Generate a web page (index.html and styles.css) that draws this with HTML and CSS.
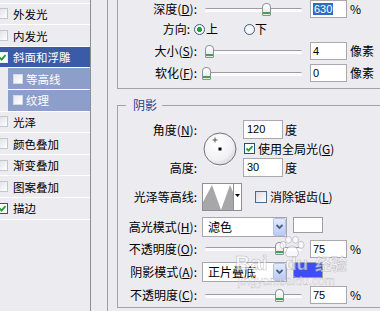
FILE: index.html
```html
<!DOCTYPE html>
<html lang="zh-CN">
<head>
<meta charset="utf-8">
<title>图层样式 - 斜面和浮雕</title>
<link rel="stylesheet" href="styles.css">
</head>
<body>
<div class="app">
  <div class="styles">
    <div class="partial"></div>
    <div class="item"><span class="cb"></span>外发光</div>
    <div class="item"><span class="cb"></span>内发光</div>
    <div class="item sel"><span class="cb on"><svg viewBox="0 0 9 9" width="9" height="9"><path d="M1.5 4.5 L3.6 6.6 L7.5 2.2" fill="none" stroke="#23a02c" stroke-width="1.8"/></svg></span>斜面和浮雕</div>
    <div class="item sub"><span class="cb"></span>等高线</div>
    <div class="item sub"><span class="cb"></span>纹理</div>
    <div class="item"><span class="cb"></span>光泽</div>
    <div class="item"><span class="cb"></span>颜色叠加</div>
    <div class="item"><span class="cb"></span>渐变叠加</div>
    <div class="item"><span class="cb"></span>图案叠加</div>
    <div class="item"><span class="cb on dark"><svg viewBox="0 0 9 9" width="9" height="9"><path d="M1.5 4.5 L3.6 6.6 L7.5 2.2" fill="none" stroke="#23a02c" stroke-width="1.8"/></svg></span>描边</div>
    <div class="item end"></div>
  </div>
  <div class="gutter"></div>
  <div class="frame">
    <div class="group-top">
      <div class="row first">
        <span class="lbl">深度(<u>D</u>):</span>
        <div class="slider"><span class="track"></span><span class="thumb" style="left:60px"></span></div>
        <span class="num"><span class="hl">630</span></span><span class="unit">%</span>
      </div>
      <div class="row">
        <span class="lbl short">方向:</span>
        <span class="radio on"></span><span class="rtxt">上</span>
        <span class="radio second"></span><span class="rtxt2">下</span>
      </div>
      <div class="row">
        <span class="lbl">大小(<u>S</u>):</span>
        <div class="slider"><span class="track"></span><span class="thumb" style="left:3px"></span></div>
        <span class="num">4</span><span class="unit">像素</span>
      </div>
      <div class="row">
        <span class="lbl">软化(<u>F</u>):</span>
        <div class="slider"><span class="track"></span><span class="thumb" style="left:0px"></span></div>
        <span class="num">0</span><span class="unit">像素</span>
      </div>
    </div>

    <fieldset class="group-shadow">
      <legend>阴影</legend>
      <div class="angle">
        <span class="lbl r1">角度(<u>N</u>):</span>
        <div class="dial">
          <svg width="34" height="34" viewBox="0 0 34 34">
            <defs>
              <radialGradient id="dg" cx="0.4" cy="0.35" r="0.7">
                <stop offset="0" stop-color="#ffffff"/>
                <stop offset="0.7" stop-color="#f1f1f4"/>
                <stop offset="1" stop-color="#d2d2d8"/>
              </radialGradient>
            </defs>
            <circle cx="17" cy="17" r="16" fill="url(#dg)" stroke="#6f7178" stroke-width="1"/>
            <path d="M12 5.5 V10.5 M9.5 8 H14.5" stroke="#333" stroke-width="0.8"/>
            <rect x="15.5" y="15.5" width="3" height="3" fill="#000"/>
          </svg>
        </div>
        <span class="cell r1c"><span class="num wide">120</span><span class="unit2">度</span></span>
        <span class="cell r2c"><span class="ck on"><svg viewBox="0 0 9 9" width="9" height="9"><path d="M1.5 4.5 L3.6 6.6 L7.5 2.2" fill="none" stroke="#23a02c" stroke-width="1.8"/></svg></span><span class="cktxt">使用全局光(<u>G</u>)</span></span>
        <span class="lbl r3">高度:</span>
        <span class="cell r3c"><span class="num wide">30</span><span class="unit2">度</span></span>
      </div>

      <div class="row contour-row">
        <span class="lbl">光泽等高线:</span>
        <div class="contour">
          <svg class="graph" width="30" height="26" viewBox="0 0 30 26">
            <polygon points="0,26 0,18 9,1 18,26 27,1 30,8 30,26" fill="#a7a7a9"/>
          </svg>
          <span class="drop"><svg width="7" height="5" viewBox="0 0 7 5"><path d="M1 1 H6 L3.5 4 Z" fill="#000"/></svg></span>
        </div>
        <span class="ck blank"></span><span class="cktxt">消除锯齿(<u>L</u>)</span>
      </div>

      <div class="row mode-row">
        <span class="lbl">高光模式(<u>H</u>):</span>
        <div class="select"><span class="seltxt">滤色</span><span class="selbtn"><svg width="11" height="16" viewBox="0 0 11 16"><path d="M2.5 6 L5.5 9 L8.5 6" fill="none" stroke="#4b5f87" stroke-width="1.8"/></svg></span></div>
        <span class="swatch white"></span>
      </div>

      <div class="row op-row">
        <span class="lbl">不透明度(<u>O</u>):</span>
        <div class="slider"><span class="track"></span><span class="thumb" style="left:73px"></span></div>
        <span class="num">75</span><span class="unit">%</span>
      </div>

      <div class="row mode-row2">
        <span class="lbl">阴影模式(<u>A</u>):</span>
        <div class="select"><span class="seltxt">正片叠底</span><span class="selbtn"><svg width="11" height="16" viewBox="0 0 11 16"><path d="M2.5 6 L5.5 9 L8.5 6" fill="none" stroke="#4b5f87" stroke-width="1.8"/></svg></span></div>
        <span class="swatch blue"></span>
      </div>

      <div class="row op-row2">
        <span class="lbl">不透明度(<u>C</u>):</span>
        <div class="slider"><span class="track"></span><span class="thumb" style="left:73px"></span></div>
        <span class="num">75</span><span class="unit">%</span>
      </div>
    </fieldset>
  </div>

  <div class="wm" aria-hidden="true">
    <span class="wm-bai">Bai</span>
    <svg class="wm-paw" width="30" height="22" viewBox="0 0 30 22">
      <g fill="rgba(255,255,255,0.65)" stroke="rgba(120,120,130,0.45)" stroke-width="0.8">
        <ellipse cx="6" cy="9" rx="3" ry="3.6"/>
        <ellipse cx="11.5" cy="3.8" rx="3" ry="3.4"/>
        <ellipse cx="18.5" cy="3.8" rx="3" ry="3.4"/>
        <ellipse cx="24" cy="9" rx="3" ry="3.6"/>
        <path d="M15 10 C10 10 8 16 9 19 C10 21.5 13 20.5 15 20.5 C17 20.5 20 21.5 21 19 C22 16 20 10 15 10 Z"/>
      </g>
    </svg>
    <span class="wm-du">du</span>
    <span class="wm-jy">经验</span>
    <span class="wm-url">jingyan.baidu.com</span>
  </div>
</div>
</body>
</html>
```

FILE: styles.css
```css
* { box-sizing: border-box; }
html, body { margin: 0; padding: 0; }
body {
  width: 380px;
  height: 311px;
  overflow: hidden;
  background: #ecebf0;
  font-family: "Noto Sans CJK SC", "Noto Sans", sans-serif;
  font-size: 12px;
  line-height: 14px;
  color: #000;
}
u { text-decoration: underline; text-underline-offset: 1px; }

.app {
  position: relative;
  display: flex;
  width: 380px;
  height: 311px;
  overflow: hidden;
  background: #ecebf0;
}

/* ---------- left style list ---------- */
.styles {
  width: 91px;
  flex: none;
  border-right: 1px solid #8d8d93;
  background: #ecebf0;
}
.partial { height: 2.7px; }
.item {
  height: 21.6px;
  border-top: 1px solid #ffffff;
  display: flex;
  align-items: center;
  gap: 5px;
  font-size: 11.5px;
  white-space: nowrap;
}
.item .cb { margin-left: -3px; }
.item.sel { background: #3b5ba6; color: #fff; }
.item.sub {
  margin-left: 8px;
  padding-left: 5px;
  gap: 3px;
  background: #8c9ec9;
  color: #fff;
}
.item.sub .cb { margin-left: 0; width: 10px; height: 10px; }
.item.end { height: 1px; }

.cb {
  width: 11px;
  height: 11px;
  flex: none;
  display: flex;
  align-items: center;
  justify-content: center;
  border: 1px solid #c3c6cf;
  background: linear-gradient(135deg, #dedfe5, #ffffff);
}
.item.sub .cb { border-color: #d4d9e6; background: linear-gradient(135deg, #e8eaf0, #fff); }
.cb.on { background: #fff; border-color: #e8ecf5; }
.cb.on.dark { border-color: #2b5680; }

.gutter { width: 16px; flex: none; }

/* ---------- right frame ---------- */
.frame {
  flex: none;
  width: 273px;
  border-left: 1px solid #9c9ca2;
  padding-left: 9px;
  overflow: hidden;
}

.group-top {
  width: 300px;
  border-left: 1px solid #a2a2a8;
  border-bottom: 1px solid #a2a2a8;
  padding-bottom: 4px;
}

.row {
  display: flex;
  align-items: center;
  height: 22px;
  white-space: nowrap;
}
.row.first { height: 18px; }

.lbl {
  width: 79px;
  flex: none;
  text-align: right;
  white-space: nowrap;
}
.lbl.short { width: 72px; }

.slider {
  position: relative;
  width: 100px;
  height: 13px;
  margin-left: 5px;
  flex: none;
}
.track {
  position: absolute;
  left: 3px;
  right: 0;
  top: 5px;
  height: 3px;
  border-radius: 2px;
  border-top: 1px solid #9c9ca2;
  background: #fbfbfc;
  box-shadow: 0 1px 0 #ffffff;
}
.thumb {
  position: absolute;
  top: 0;
  width: 9px;
  height: 13px;
  background:
    linear-gradient(#3da447, #3da447) bottom 1px center / 7px 2px no-repeat,
    linear-gradient(#ffffff, #e4e4e8);
  border: 1px solid #8a929a;
  border-radius: 4px 4px 1px 1px;
}

.num {
  margin-left: 8px;
  width: 37px;
  height: 18px;
  flex: none;
  border: 1px solid #a9a9af;
  background: #fff;
  padding-left: 2px;
  font-family: "Liberation Sans", "DejaVu Sans", sans-serif;
  font-size: 11px;
  line-height: 16px;
}
.hl { background: #316ac5; color: #fff; padding: 0 1px; }
.unit { margin-left: 3px; }
.unit2 { margin-left: 2px; }

.radio {
  width: 11px;
  height: 11px;
  flex: none;
  border-radius: 50%;
  border: 1px solid #3d5f86;
  background: radial-gradient(circle, #ffffff 0, #ececf0 100%);
  margin-left: 4px;
}
.radio.on {
  background: radial-gradient(circle, #2c9b3a 0 2.2px, #ffffff 2.8px, #e8e8ec 100%);
}
.radio.second { margin-left: 26px; }
.rtxt { margin-left: 1px; }
.rtxt2 { margin-left: 0; }

/* ---------- shadow group ---------- */
.group-shadow {
  width: 300px;
  min-inline-size: 0;
  margin: 9px 0 0 0;
  padding: 0 0 3px 0;
  border: 1px solid #a2a2a8;
}
.group-shadow legend {
  margin-left: 8px;
  padding: 0 5px 0 7px;
  color: #21459b;
  line-height: 14px;
  font-size: 12px;
}

.angle {
  display: grid;
  grid-template-columns: 79px 36px auto;
  grid-template-rows: 19px 19px 19px;
  column-gap: 5px;
  margin-top: 8px;
  align-items: center;
}
.angle .r1 { grid-column: 1; grid-row: 1; }
.angle .r3 { grid-column: 1; grid-row: 3; }
.dial {
  grid-column: 2;
  grid-row: 1 / 4;
  display: flex;
  justify-content: center;
  align-self: center;
}
.dial svg { display: block; filter: drop-shadow(0 1px 0 rgba(255,255,255,0.9)); }
.cell { display: flex; align-items: center; grid-column: 3; height: 19px; }
.r1c { grid-row: 1; }
.r2c { grid-row: 2; }
.r3c { grid-row: 3; }
.num.wide { margin-left: 0; width: 40px; height: 19px; line-height: 17px; padding-left: 3px; }

.ck {
  width: 11px;
  height: 11px;
  flex: none;
  display: flex;
  align-items: center;
  justify-content: center;
  border: 1px solid #23507d;
  background: #fff;
}
.r2c .ck { margin-left: 1px; }
.ck.blank {
  width: 12px;
  height: 12px;
  margin-left: 13px;
  border-color: #4b6a8f;
  background: linear-gradient(135deg, #dcdce2, #ffffff);
}
.cktxt { margin-left: 3px; white-space: nowrap; }

.contour-row { height: 28px; margin-top: 6px; }
.contour {
  margin-left: 5px;
  width: 40px;
  height: 28px;
  flex: none;
  display: flex;
  border: 1px solid #8e8e94;
  background: #fff;
}
.graph { display: block; }
.drop {
  flex: 1;
  display: flex;
  justify-content: center;
  padding-top: 9px;
  border-left: 1px solid #8e8e94;
}
.drop svg { display: block; }

.mode-row { height: 20px; margin-top: 6px; }
.op-row { height: 19px; margin-top: 2px; }
.mode-row2 { height: 20px; margin-top: 4px; }
.op-row2 { height: 18px; margin-top: 4px; }

.select {
  margin-left: 5px;
  width: 85px;
  height: 20px;
  flex: none;
  display: flex;
  align-items: center;
  border: 1px solid #a6a6ac;
  background: #fff;
}
.seltxt { flex: 1; padding-left: 5px; }
.selbtn {
  width: 13px;
  height: 18px;
  flex: none;
  display: flex;
  justify-content: center;
  align-items: center;
  border: 1px solid #b5c3e6;
  border-radius: 2px;
  background: linear-gradient(#e2eafc, #b9caf2);
}
.selbtn svg { display: block; }

.swatch {
  margin-left: 6px;
  width: 30px;
  height: 16px;
  flex: none;
  border: 1px solid #9c9ca2;
  align-self: flex-start;
}
.swatch.white { background: #fff; }
.swatch.blue { background: #3f4ef2; }

/* ---------- watermark overlay ---------- */
.wm {
  position: absolute;
  left: 233px;
  top: 234px;
  width: 130px;
  height: 60px;
  pointer-events: none;
  color: rgba(255, 255, 255, 0.62);
}
.wm-bai, .wm-du {
  position: absolute;
  font-family: "Liberation Sans", sans-serif;
  font-weight: bold;
  -webkit-text-stroke: 0.6px rgba(110, 110, 120, 0.45);
}
.wm-bai { left: 2px; top: 18px; font-size: 21px; line-height: 21px; }
.wm-paw { position: absolute; left: 44px; top: 2px; }
.wm-du { left: 52px; top: 20px; font-size: 19px; line-height: 19px; }
.wm-jy {
  position: absolute;
  left: 82px;
  top: 20px;
  font-size: 16px;
  line-height: 18px;
  font-weight: bold;
  -webkit-text-stroke: 0.5px rgba(110, 110, 120, 0.45);
}
.wm-url {
  position: absolute;
  left: 5px;
  top: 41px;
  font-family: "Liberation Sans", sans-serif;
  font-size: 12px;
  line-height: 13px;
  -webkit-text-stroke: 0.4px rgba(110, 110, 120, 0.4);
}
```
